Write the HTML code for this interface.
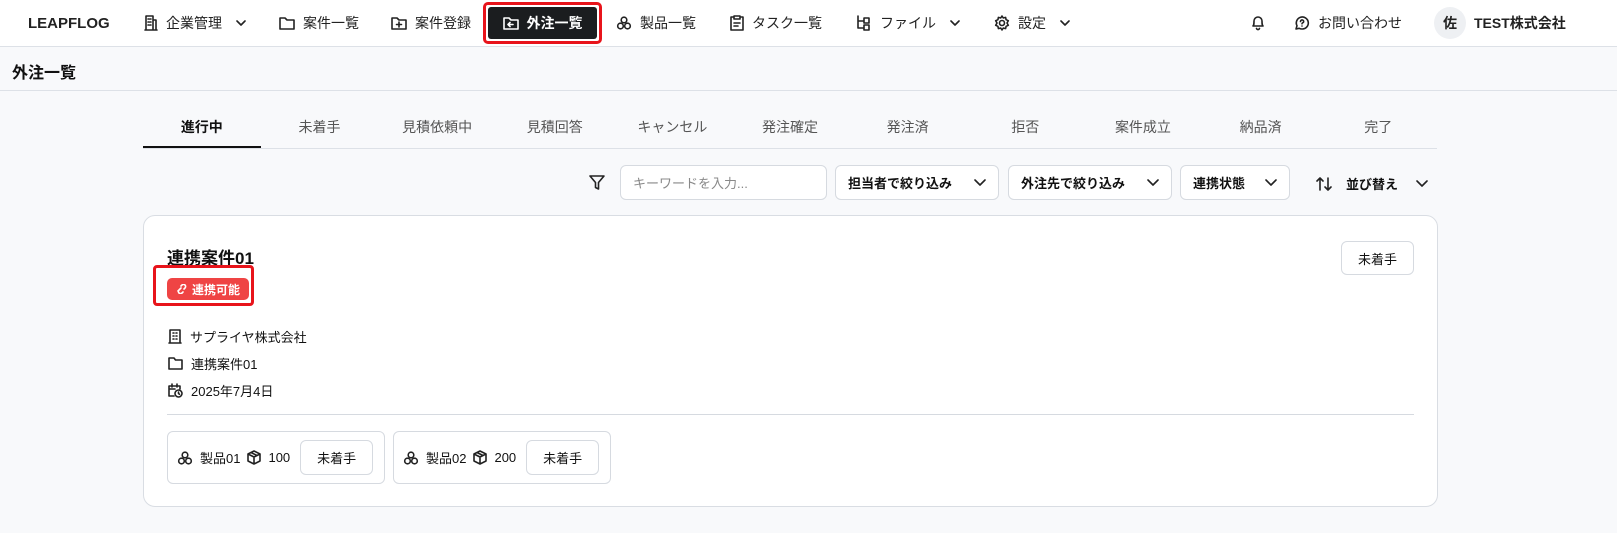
<!DOCTYPE html>
<html><head><meta charset="utf-8"><style>
*{box-sizing:border-box;margin:0;padding:0}
body{width:1617px;height:533px;overflow:hidden;background:#f8f9fb;font-family:"Liberation Sans","Noto Sans CJK JP",sans-serif;color:#111;font-size:14px}
.nav{height:47px;background:#fff;border-bottom:1px solid #dde1e7;position:relative}
.nav .it{position:absolute;top:0;height:46px;display:flex;align-items:center;gap:8px;font-size:14px;color:#222}
svg{fill:none;stroke:#222;stroke-width:1.6;stroke-linecap:round;stroke-linejoin:round}
.active{position:absolute;left:483px;top:2px;width:119px;height:42px;border:3px solid #e8141b;border-radius:5px}
.active div{position:absolute;inset:2px;background:#1b1d1f;border-radius:3px;color:#fff;display:flex;align-items:center;justify-content:center;gap:8px;font-weight:bold}
.title{height:44px;border-bottom:1px solid #dde1e7;padding:12px 12px;font-weight:bold;font-size:16px}
.tabs{position:absolute;left:143px;top:107px;width:1294px;height:42px;border-bottom:1px solid #dde1e7;display:flex}
.tabs div{flex:1;text-align:center;line-height:40px;color:#555;font-size:14px}
.tabs .on{color:#111;font-weight:bold;border-bottom:2px solid #111}
.sel{position:absolute;top:165px;height:35px;background:#fff;border:1px solid #d6dae0;border-radius:6px;display:flex;align-items:center;padding:0 12px;justify-content:space-between;font-size:13px;font-weight:bold}
.card{position:absolute;left:143px;top:215px;width:1295px;height:292px;background:#fff;border:1px solid #d9dde3;border-radius:12px}
.btn{position:absolute;border:1px solid #d6dae0;border-radius:6px;background:#fff;display:flex;align-items:center;justify-content:center;font-size:13px}
.row{position:absolute;left:24px;display:flex;align-items:center;gap:8px;font-size:13px}
.pbox{position:absolute;top:215px;height:53px;border:1px solid #d6dae0;border-radius:6px;display:flex;align-items:center;padding-left:9px;gap:7px;font-size:13px}
</style></head><body>
<div class="nav">
<div class="it" style="left:28px;font-weight:bold;font-size:15px">LEAPFLOG</div>
<div class="it" style="left:144px"><svg width="14" height="16" viewBox="0 0 14 16"><path d="M2 15V1h7v14M9 5h3v10M1 15h12M4 4h1M6 4h1M4 7h1M6 7h1M4 10h1M6 10h1"/></svg>企業管理 <svg width="10" height="6" viewBox="0 0 10 6" style="margin-left:6px"><path d="M1 1l4 4 4-4"/></svg></div>
<div class="it" style="left:279px"><svg width="16" height="14" viewBox="0 0 16 14"><path d="M1 2h5l2 2h7v9H1z"/></svg>案件一覧</div>
<div class="it" style="left:391px"><svg width="16" height="14" viewBox="0 0 16 14"><path d="M1 2h5l2 2h7v9H1zM8 6v5M5.5 8.5h5"/></svg>案件登録</div>
<div class="active"><div><svg width="16" height="14" viewBox="0 0 16 14" style="stroke:#fff"><path d="M1 2h5l2 2h7v9H1zM10 8.5H5M7 6.5l-2 2 2 2"/></svg>外注一覧</div></div>
<div class="it" style="left:616px"><svg width="16" height="16" viewBox="0 0 16 16"><circle cx="8" cy="5" r="2.8"/><circle cx="4.5" cy="11" r="2.8"/><circle cx="11.5" cy="11" r="2.8"/></svg>製品一覧</div>
<div class="it" style="left:730px"><svg width="14" height="16" viewBox="0 0 14 16"><path d="M3 2H1v13h12V2h-2M4 1h6v3H4zM4 8h6M4 11h4"/></svg>タスク一覧</div>
<div class="it" style="left:856px"><svg width="16" height="16" viewBox="0 0 16 16"><path d="M2 1v12h5M2 6h5M8 3h5v5H8zM8 10h5v5H8z"/></svg>ファイル <svg width="10" height="6" viewBox="0 0 10 6" style="margin-left:6px"><path d="M1 1l4 4 4-4"/></svg></div>
<div class="it" style="left:994px"><svg width="16" height="16" viewBox="0 0 16 16"><circle cx="8" cy="8" r="2.5"/><path d="M8 1l1.3 2 2.3-.6.5 2.3 2.2 1L13 8l1.3 2.3-2.2 1-.5 2.3-2.3-.6L8 15l-1.3-2-2.3.6-.5-2.3-2.2-1L3 8 1.7 5.7l2.2-1 .5-2.3 2.3.6z"/></svg>設定 <svg width="10" height="6" viewBox="0 0 10 6" style="margin-left:6px"><path d="M1 1l4 4 4-4"/></svg></div>
<div class="it" style="left:1251px"><svg width="14" height="16" viewBox="0 0 14 16"><path d="M2 11c1-1 1-2 1-5a4 4 0 018 0c0 3 0 4 1 5zM5.5 13.5a1.6 1.6 0 003 0"/></svg></div>
<div class="it" style="left:1294px"><svg width="16" height="16" viewBox="0 0 16 16"><path d="M2 14l1-3.2A6 6 0 118 14a6 6 0 01-2.8-.7z"/><path d="M6.5 6.5a1.6 1.6 0 113 .8c-.6.4-1.5.6-1.5 1.5M8 11h0"/></svg>お問い合わせ</div>
<div class="it" style="left:1434px;font-weight:bold"><span style="width:32px;height:32px;border-radius:50%;background:#eef0f3;display:flex;align-items:center;justify-content:center;font-weight:bold">佐</span>TEST株式会社</div>
</div>
<div class="title">外注一覧</div>
<div class="tabs"><div class="on">進行中</div><div>未着手</div><div>見積依頼中</div><div>見積回答</div><div>キャンセル</div><div>発注確定</div><div>発注済</div><div>拒否</div><div>案件成立</div><div>納品済</div><div>完了</div></div>
<svg style="position:absolute;left:589px;top:175px" width="16" height="15" viewBox="0 0 16 15"><path d="M1 1h14l-5.5 6.5V14l-3-1.5v-5z"/></svg>
<div class="sel" style="left:620px;width:207px;font-weight:normal;color:#888">キーワードを入力...</div>
<div class="sel" style="left:835px;width:164px">担当者で絞り込み<svg width="12" height="8" viewBox="0 0 12 8"><path d="M1 1l5 5 5-5"/></svg></div>
<div class="sel" style="left:1008px;width:164px">外注先で絞り込み<svg width="12" height="8" viewBox="0 0 12 8"><path d="M1 1l5 5 5-5"/></svg></div>
<div class="sel" style="left:1180px;width:110px">連携状態<svg width="12" height="8" viewBox="0 0 12 8"><path d="M1 1l5 5 5-5"/></svg></div>
<div style="position:absolute;left:1316px;top:174px;display:flex;align-items:center;gap:14px;font-weight:bold;font-size:13px"><svg width="16" height="14" viewBox="0 0 16 14"><path d="M4 13V1M1 4l3-3 3 3M12 1v12M9 10l3 3 3-3"/></svg>並び替え<svg width="12" height="8" viewBox="0 0 12 8" style="margin-left:4px"><path d="M1 1l5 5 5-5"/></svg></div>
<div class="card">
<div style="position:absolute;left:23px;top:28px;font-size:17px;font-weight:bold">連携案件01</div>
<div style="position:absolute;left:9px;top:49px;width:101px;height:41px;border:3px solid #e8141b;border-radius:4px"></div>
<div style="position:absolute;left:23px;top:62px;width:82px;height:22px;background:#ef4444;border-radius:5px;color:#fff;font-size:12px;font-weight:bold;display:flex;align-items:center;justify-content:center;gap:4px"><svg width="12" height="10" viewBox="0 0 12 10" style="stroke:#fff"><path d="M2 7l3-3M5 2l1-1a2 2 0 013 3l-1 1M7 8l-1 1a2 2 0 01-3-3l1-1"/></svg>連携可能</div>
<div class="btn" style="left:1197px;top:25px;width:73px;height:34px">未着手</div>
<div class="row" style="top:111px"><svg width="14" height="15" viewBox="0 0 14 15"><path d="M2 14V1h10v13M1 14h12M5 4h1M8 4h1M5 7h1M8 7h1M5 10h1M8 10h1"/></svg>サプライヤ株式会社</div>
<div class="row" style="top:138px"><svg width="15" height="13" viewBox="0 0 15 13"><path d="M1 1h5l1.5 2H14v9H1z"/></svg>連携案件01</div>
<div class="row" style="top:165px"><svg width="15" height="15" viewBox="0 0 15 15"><path d="M6 13H1V3h11v3M4 1v3M9 1v3M1 6h6"/><circle cx="10.5" cy="10.5" r="3.5"/><path d="M10.5 9v1.5l1 .8"/></svg>2025年7月4日</div>
<div style="position:absolute;left:23px;right:23px;top:198px;border-top:1px solid #d6dae0"></div>
<div class="pbox" style="left:23px;width:218px"><svg width="16" height="16" viewBox="0 0 16 16"><circle cx="8" cy="5" r="2.8"/><circle cx="4.5" cy="11" r="2.8"/><circle cx="11.5" cy="11" r="2.8"/></svg>製品01 <svg width="14" height="15" viewBox="0 0 14 15"><path d="M7 1l6 3v7l-6 3-6-3V4zM1 4l6 3 6-3M7 7v7M4 2.5l6 3"/></svg>100<div class="btn" style="position:static;width:73px;height:35px;margin-left:3px">未着手</div></div>
<div class="pbox" style="left:249px;width:218px"><svg width="16" height="16" viewBox="0 0 16 16"><circle cx="8" cy="5" r="2.8"/><circle cx="4.5" cy="11" r="2.8"/><circle cx="11.5" cy="11" r="2.8"/></svg>製品02 <svg width="14" height="15" viewBox="0 0 14 15"><path d="M7 1l6 3v7l-6 3-6-3V4zM1 4l6 3 6-3M7 7v7M4 2.5l6 3"/></svg>200<div class="btn" style="position:static;width:73px;height:35px;margin-left:3px">未着手</div></div>
</div>
</body></html>
